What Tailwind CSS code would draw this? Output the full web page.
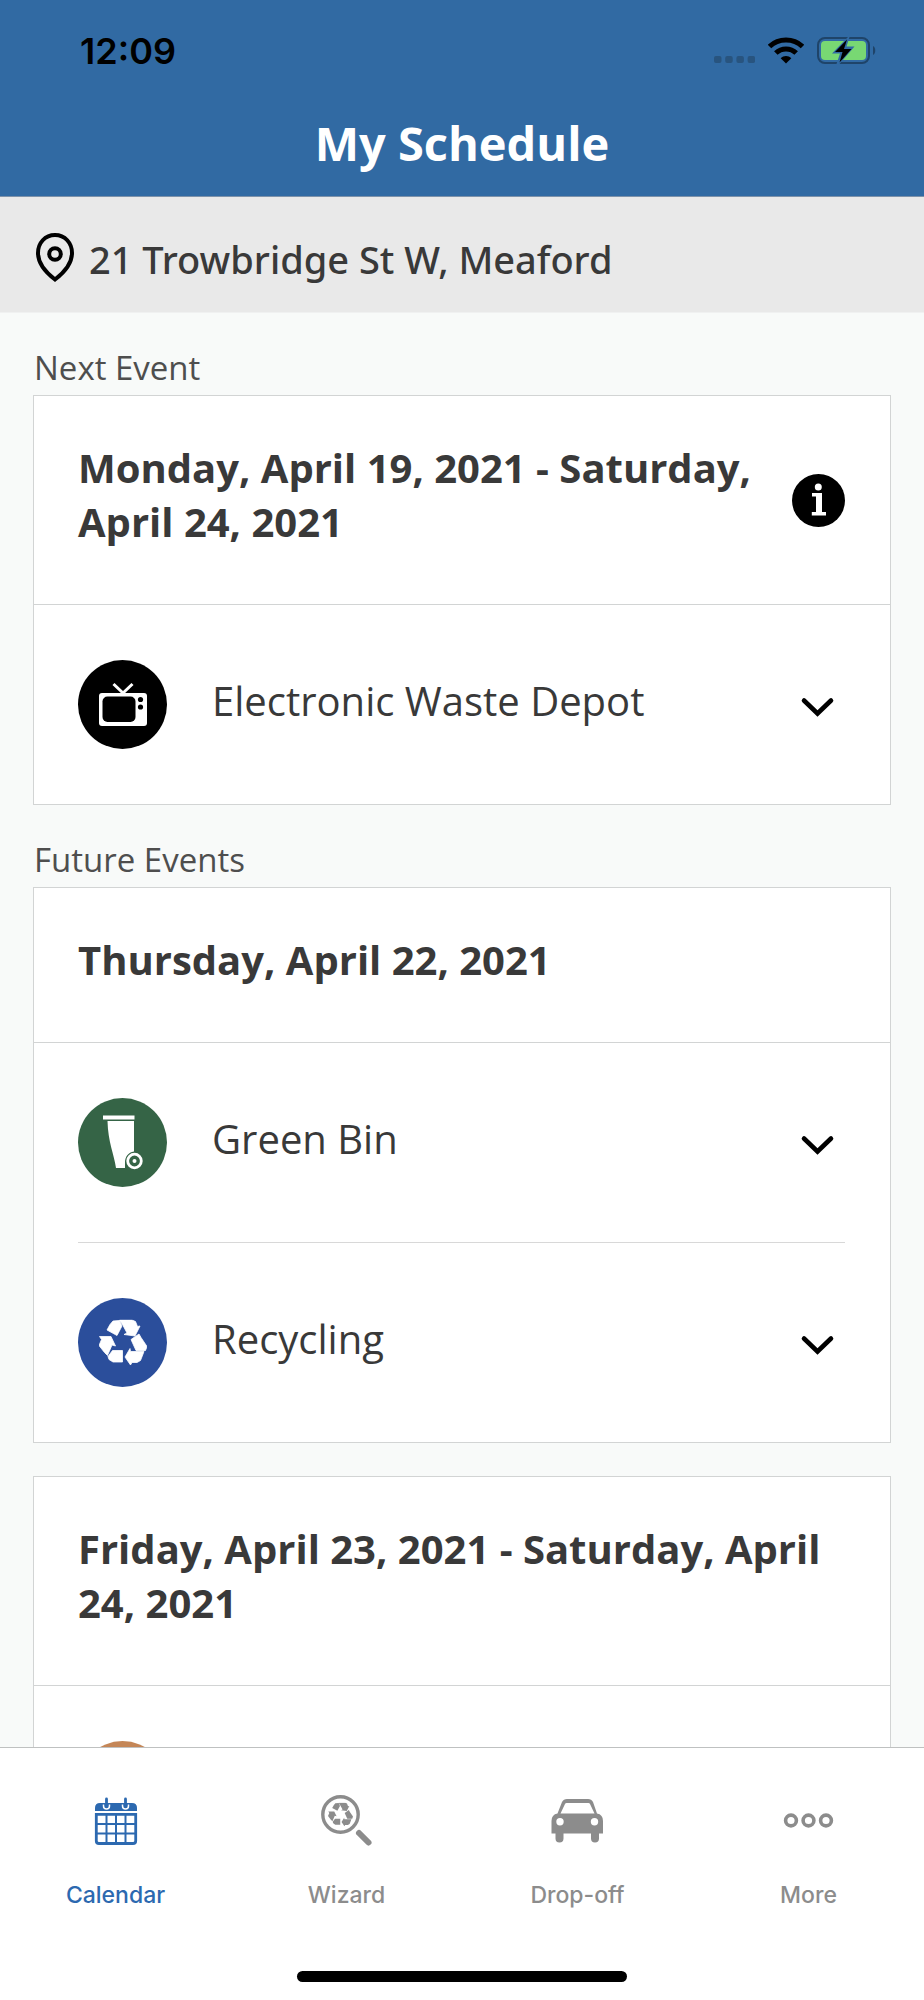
<!DOCTYPE html>
<html lang="en">
<head>
<meta charset="utf-8">
<meta name="viewport" content="width=device-width, initial-scale=1">
<title>My Schedule</title>
<script src="https://cdn.jsdelivr.net/npm/@tailwindcss/browser@4"></script>
</head>
<body class="flex h-screen flex-col overflow-hidden bg-[#f8faf9] font-['Open_Sans',sans-serif] text-[#393939]">

<svg class="hidden" aria-hidden="true">
  <symbol id="recycle" viewBox="0 0 48 46">
    <path d="M14 1.500L20.500 1L23 6.500L18 16L8 10.500L11 5ZM20.500 .5H33L36.500 2L38.500 7L41 6.500L36 16.500L25 15L28 13.500L24 6ZM32 20L40 14.500L42 18L48 27L46.500 31H37ZM26 37.500L31 29L31.500 32H45L41.500 41L38 43H33L31.500 45.500ZM13.500 31H23.500V42.500H14L10 40L9 37ZM.5 17H12L16.500 26.500L13 25.500L8.500 36L5.500 33L0 26L2.500 20Z"/>
  </symbol>
</svg>

<header class="shrink-0 border-b border-[#7d92aa] bg-[#316aa3]">
  <div class="flex h-[101px] items-center justify-between pr-12 pl-20">
    <time class="font-['Inter',sans-serif] text-[36px] leading-10 font-semibold text-black">12:09</time>
    <div class="flex items-end gap-[13px]">
      <svg class="h-[8px] w-[41px]" viewBox="0 0 41 8" fill="#28547f" aria-label="No signal"><rect width="7.500" height="7" rx="2"/><rect x="11.200" width="7.500" height="7" rx="2"/><rect x="22.400" width="7.500" height="7" rx="2"/><rect x="33.600" width="7.500" height="7" rx="2"/></svg>
      <svg class="h-[27px] w-[36px]" viewBox="0 0 36 27" aria-label="Wi-Fi"><path d="M1.500 9.500C10.500 .8 25.500 .8 34.500 9.500M7.800 16C13.500 10.500 22.500 10.500 28.200 16" fill="none" stroke="#000" stroke-width="5"/><path d="M12.700 21.200C15.600 18.200 20.400 18.200 23.300 21.200L18 26.500Z"/></svg>
      <svg class="h-[27px] w-[59px]" viewBox="0 0 59 27" aria-label="Battery charging"><rect x="1" y="1" width="51" height="25" rx="7" fill="none" stroke="#1f4469" stroke-width="2"/><rect x="4" y="4" width="45" height="19" rx="4" fill="#78d873"/><path d="M56 9C59 10.500 59 16.500 56 18Z" fill="#1f4469"/><path d="M31 0L15 16.500H23L19.500 27H22.500L37.500 9.500H29.500L32.500 0Z" fill="#316aa3"/><path d="M30 2.500L18 15H25.500L22.500 25.500L34.500 12H27Z"/></svg>
    </div>
  </div>
  <h1 class="pt-[10px] pb-[21px] text-center text-[47px] leading-[64px] font-bold text-white">My Schedule</h1>
</header>

<div class="flex h-[116px] shrink-0 items-center gap-[15px] border-b border-[#f0f1f1] bg-[#e9e9e9] px-9 pt-[5px]">
  <svg class="h-[49px] w-[38px]" viewBox="0 0 38 49" fill="none" stroke="#000" stroke-width="4" aria-hidden="true"><path d="M19 2C9 2 2 10 2 20C2 31 10.500 40 19 46.500C27.500 40 36 31 36 20C36 10 29 2 19 2Z"/><circle cx="19" cy="21" r="5.800"/></svg>
  <p class="pt-[4px] font-['Noto_Sans','Open_Sans',sans-serif] text-[38px] leading-[50px] font-medium">21 Trowbridge St W, Meaford</p>
</div>

<main class="min-h-0 flex-1 overflow-y-auto px-[33px] [scrollbar-width:none]">
  <h2 class="mt-8 mb-1 pl-px text-[33px] leading-[46px] text-[#4e4e4e]">Next Event</h2>
  <section class="border border-[#d2d4d4] bg-white">
    <div class="flex items-center justify-between border-b border-[#d2d4d4] pr-[45px] pl-11">
      <h3 class="pt-[45px] pb-[55px] text-[40px] leading-[54px] font-bold">Monday, April 19, 2021 - Saturday, April 24, 2021</h3>
      <button class="shrink-0" aria-label="Information"><svg class="size-[53px]" viewBox="0 0 53 53" aria-hidden="true"><circle cx="26.500" cy="26.500" r="26.500"/><circle cx="26.300" cy="13" r="3.500" fill="#fff"/><path d="M20 19H30V38H34V41.500H19.800V38H24V22.500H20Z" fill="#fff"/></svg></button>
    </div>
    <div class="flex items-center py-[55px] pr-[45px] pl-11">
      <svg class="size-[89px] shrink-0" viewBox="0 0 89 89" aria-hidden="true"><circle cx="44.500" cy="44.500" r="44.500"/><path d="M35.500 24L45 33L54.500 24" fill="none" stroke="#fff" stroke-width="3"/><rect x="21" y="33" width="48" height="33" rx="3" fill="#fff"/><rect x="24.500" y="36.500" width="33" height="25.500" rx="5"/><circle cx="62.500" cy="39.500" r="2.600"/><circle cx="62.500" cy="47" r="2.600"/></svg>
      <p class="flex-1 pb-2 pl-[45px] text-[40px] leading-[54px]">Electronic Waste Depot</p>
      <button aria-label="Show Electronic Waste Depot details"><svg class="size-[53px]" viewBox="0 0 53 53" fill="none" stroke="#000" stroke-width="4.600" stroke-linecap="round" aria-hidden="true"><path d="M12 22.500L25.500 35.500L39 22.500"/></svg></button>
    </div>
  </section>

  <h2 class="mt-8 mb-1 pl-px text-[33px] leading-[46px] text-[#4e4e4e]">Future Events</h2>
  <section class="border border-[#d2d4d4] bg-white">
    <h3 class="border-b border-[#d2d4d4] px-11 pt-[45px] pb-[55px] text-[40px] leading-[54px] font-bold">Thursday, April 22, 2021</h3>
    <div class="pr-[45px] pl-11">
      <div class="flex items-center border-b border-[#d8d8d8] py-[55px]">
        <svg class="size-[89px] shrink-0" viewBox="0 0 89 89" aria-hidden="true"><circle cx="44.500" cy="44.500" r="44.500" fill="#356446"/><path d="M25 17.500H56.500V21.500H25ZM29.500 23H56V53.500C50 54.500 47 59 47 64V70H38C36 56 30 44 29.500 23Z" fill="#fff"/><circle cx="56.500" cy="63" r="6.800" fill="none" stroke="#fff" stroke-width="2.800"/><circle cx="56.500" cy="63" r="2" fill="#fff"/></svg>
        <p class="flex-1 pb-2 pl-[45px] text-[40px] leading-[54px]">Green Bin</p>
        <button aria-label="Show Green Bin details"><svg class="size-[53px]" viewBox="0 0 53 53" fill="none" stroke="#000" stroke-width="4.600" stroke-linecap="round" aria-hidden="true"><path d="M12 22.500L25.500 35.500L39 22.500"/></svg></button>
      </div>
      <div class="flex items-center py-[55px]">
        <svg class="size-[89px] shrink-0" viewBox="0 0 89 89" aria-hidden="true"><circle cx="44.500" cy="44.500" r="44.500" fill="#2b4e9b"/><use href="#recycle" x="21" y="21.500" width="48" height="46" fill="#fff" stroke="#fff" stroke-width=".8" stroke-linejoin="round"/></svg>
        <p class="flex-1 pb-2 pl-[45px] text-[40px] leading-[54px]">Recycling</p>
        <button aria-label="Show Recycling details"><svg class="size-[53px]" viewBox="0 0 53 53" fill="none" stroke="#000" stroke-width="4.600" stroke-linecap="round" aria-hidden="true"><path d="M12 22.500L25.500 35.500L39 22.500"/></svg></button>
      </div>
    </div>
  </section>

  <section class="mt-[33px] border border-[#d2d4d4] bg-white">
    <h3 class="border-b border-[#d2d4d4] px-11 pt-[45px] pb-[55px] text-[40px] leading-[54px] font-bold">Friday, April 23, 2021 - Saturday, April 24, 2021</h3>
    <div class="px-11 py-[55px]">
      <div class="size-[89px] rounded-full bg-[#c48657]"></div>
    </div>
  </section>
</main>

<nav class="shrink-0 border-t border-[#bfc1c1] bg-white font-['Inter',sans-serif] text-[23px] leading-7 font-medium text-[#8c8c8c]">
  <div class="grid grid-cols-4 pt-[47px]">
    <a href="#calendar" aria-current="page" class="flex flex-col items-center gap-[34px] text-[#2c69b0]">
      <svg class="h-[52px] w-[54px]" viewBox="0 0 54 52" aria-hidden="true"><path d="M6 16V13Q6 8 11 8H43Q48 8 48 13V16Z" fill="currentColor"/><path d="M7.300 19.300H46.700V46Q46.700 48.500 44 48.500H10Q7.300 48.500 7.300 46Z" fill="none" stroke="currentColor" stroke-width="2.800"/><path d="M17.500 19V48M27 19V48M36.500 19V48M7 29H47M7 38.500H47" stroke="currentColor" stroke-width="2"/><path d="M14.500 9.500V11A3 3 0 0 0 20.500 11V9.500M33.500 9.500V11A3 3 0 0 0 39.500 11V9.500" fill="none" stroke="#fff" stroke-width="1.500"/><path d="M17.500 4V11M36.500 4V11" stroke="currentColor" stroke-width="2.800" stroke-linecap="round"/></svg>
      <span>Calendar</span>
    </a>
    <a href="#wizard" class="flex flex-col items-center gap-[34px]">
      <svg class="h-[52px] w-[54px]" viewBox="0 0 54 52" aria-hidden="true"><circle cx="20.500" cy="19.500" r="17.700" fill="none" stroke="currentColor" stroke-width="3.400"/><path d="M39 38L48.500 47.500" stroke="currentColor" stroke-width="6" stroke-linecap="round"/><use href="#recycle" x="8" y="7.500" width="25" height="24" fill="currentColor"/></svg>
      <span>Wizard</span>
    </a>
    <a href="#drop-off" class="flex flex-col items-center gap-[34px]">
      <svg class="h-[52px] w-[54px]" viewBox="0 0 54 52" aria-hidden="true"><path fill="currentColor" fill-rule="evenodd" d="M16 4H37Q40.500 4 42 7L46 18.500Q52 19.500 52 26V38.500H48V43.500A4 4 0 0 1 40 43.500V38.500H12.500V43.500A4 4 0 0 1 4.500 43.500V38.500H.5V26Q.5 19.500 6.500 18.500L11 7Q12.500 4 16 4ZM15.500 8Q14.500 8 14 9L9.500 18.500H43.500L39 9Q38.500 8 37.500 8ZM9 23A3.700 3.700 0 1 0 9 30.400A3.700 3.700 0 1 0 9 23ZM43.500 23A3.700 3.700 0 1 0 43.500 30.400A3.700 3.700 0 1 0 43.500 23Z"/></svg>
      <span>Drop-off</span>
    </a>
    <a href="#more" class="flex flex-col items-center gap-[34px]">
      <svg class="h-[52px] w-[54px]" viewBox="0 0 54 52" fill="none" stroke="currentColor" stroke-width="3.600" aria-hidden="true"><circle cx="9" cy="25.500" r="5.400"/><circle cx="26.500" cy="25.500" r="5.400"/><circle cx="44" cy="25.500" r="5.400"/></svg>
      <span>More</span>
    </a>
  </div>
  <div class="mx-auto mt-[62px] mb-[18px] h-[11px] w-[330px] rounded-full bg-black"></div>
</nav>
</body>
</html>
